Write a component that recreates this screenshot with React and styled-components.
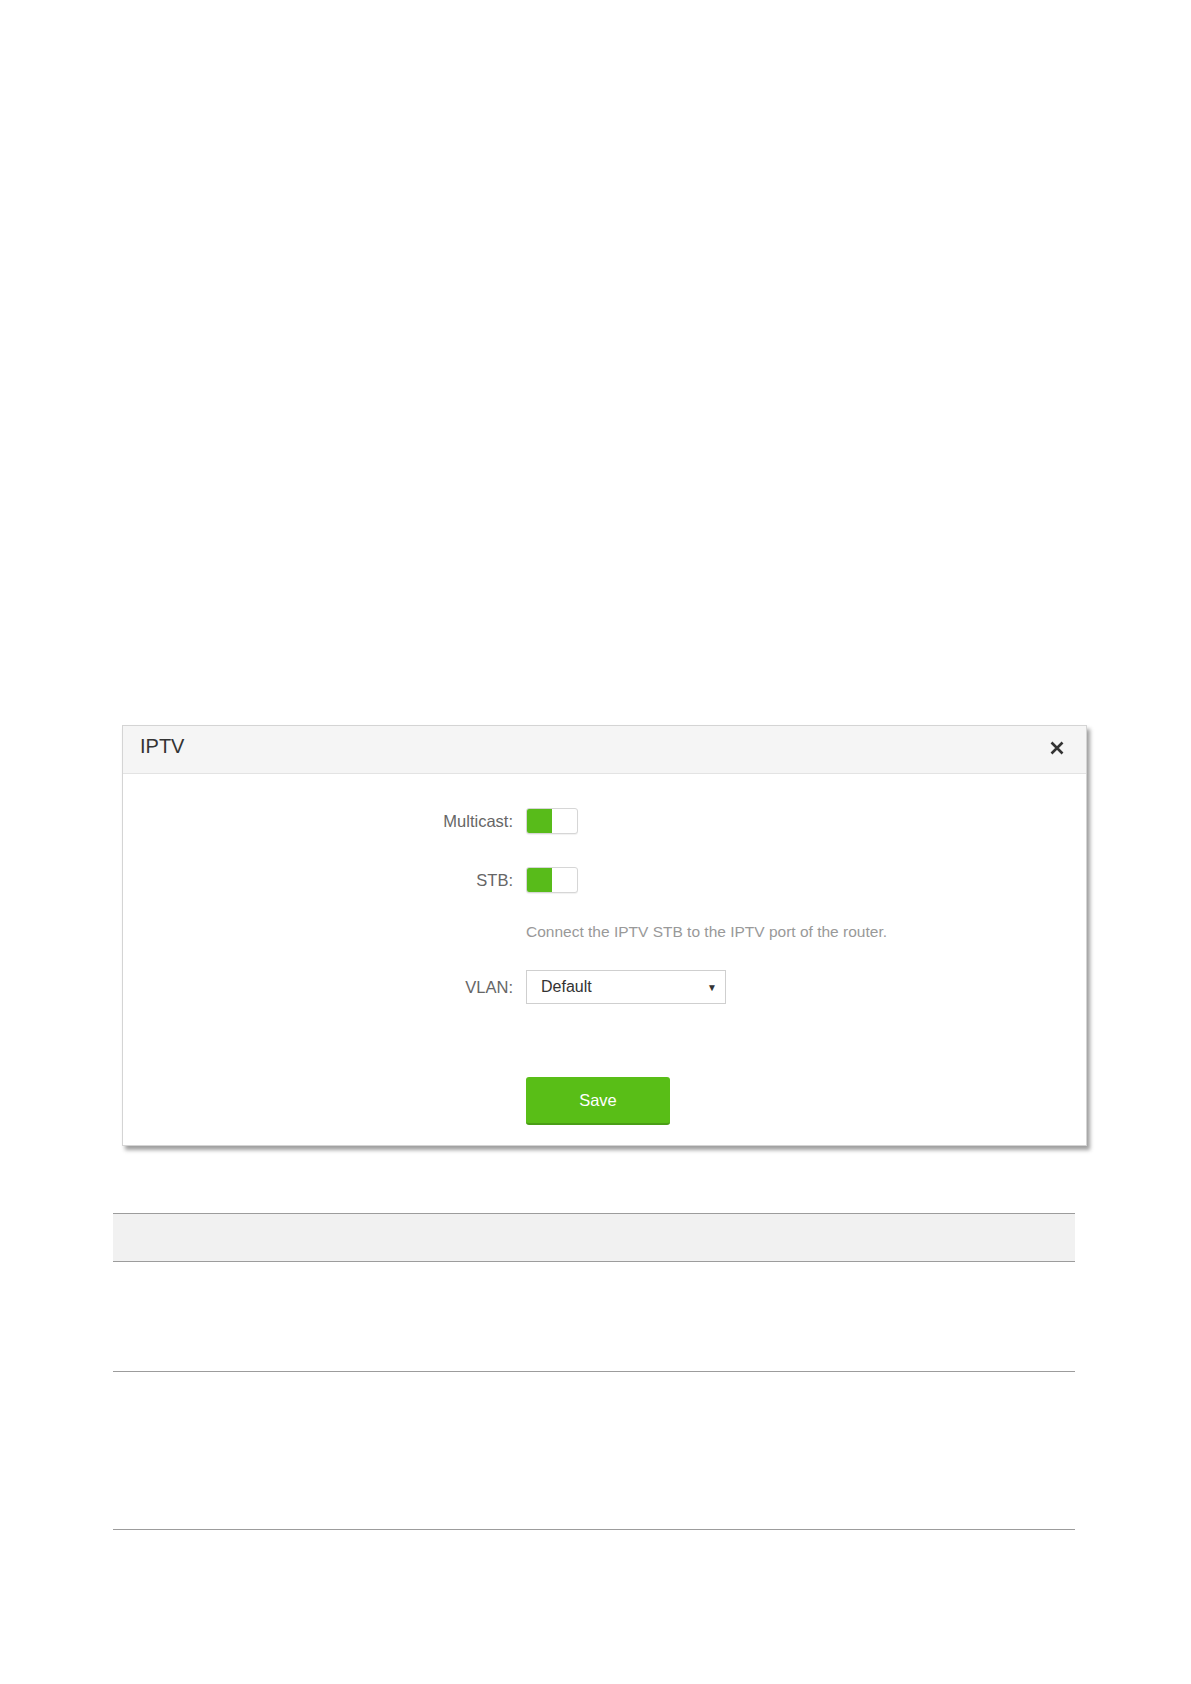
import styled, { createGlobalStyle } from "styled-components";

const GlobalStyle = createGlobalStyle`
  html, body {
    margin: 0;
    padding: 0;
    background: #fff;
  }
  body {
    font-family: "Liberation Sans", Arial, sans-serif;
  }
`;

const App = () => {
  return (
    <Page>
      <GlobalStyle />
      <Dialog>
        <DialogHeader>
          <Title>IPTV</Title>
          <CloseButton aria-label="close">
            <svg width="14" height="14" viewBox="0 0 14 14">
              <path
                d="M1.5 1.5 L12.5 12.5 M12.5 1.5 L1.5 12.5"
                stroke="#333"
                strokeWidth="2.6"
                strokeLinecap="butt"
              />
            </svg>
          </CloseButton>
        </DialogHeader>

        <DialogBody>
          <FormRow>
            <Label>Multicast:</Label>
            <Toggle>
              <ToggleOn />
            </Toggle>
          </FormRow>

          <FormRow $top={33}>
            <Label>STB:</Label>
            <Toggle>
              <ToggleOn />
            </Toggle>
          </FormRow>

          <FormRow $top={30}>
            <Label />
            <Hint>Connect the IPTV STB to the IPTV port of the router.</Hint>
          </FormRow>

          <FormRow $top={29}>
            <Label>VLAN:</Label>
            <Select>
              <span>Default</span>
              <Caret>▼</Caret>
            </Select>
          </FormRow>

          <FormRow $top={73}>
            <Label />
            <SaveButton>Save</SaveButton>
          </FormRow>
        </DialogBody>
      </Dialog>

      <Table>
        <tbody>
          <HeadRow>
            <td />
          </HeadRow>
          <BodyRow $h={110}>
            <td />
          </BodyRow>
          <BodyRow $h={158}>
            <td />
          </BodyRow>
        </tbody>
      </Table>
    </Page>
  );
};

export default App;

const Page = styled.div`
  padding-top: 725px;
  padding-bottom: 150px;
`;

const Dialog = styled.div`
  margin-left: 122px;
  width: 963px;
  height: 419px;
  border: 1px solid #d4d4d4;
  background: #fff;
  box-shadow: 3px 4px 4px rgba(0, 0, 0, 0.38);
  display: flex;
  flex-direction: column;
`;

const DialogHeader = styled.div`
  height: 47px;
  background: #f5f5f5;
  border-bottom: 1px solid #e3e3e3;
  display: flex;
  align-items: flex-start;
  justify-content: space-between;
  padding: 0 22px 0 17px;
`;

const Title = styled.h3`
  margin: 0;
  padding-top: 8px;
  font-weight: normal;
  font-size: 20px;
  line-height: 24px;
  color: #333;
`;

const CloseButton = styled.div`
  margin-top: 15px;
  width: 14px;
  height: 14px;
  cursor: pointer;
  > svg {
    display: block;
  }
`;

const DialogBody = styled.div`
  padding-top: 34px;
  display: flex;
  flex-direction: column;
`;

const FormRow = styled.div`
  display: flex;
  align-items: center;
  gap: 13px;
  margin-top: ${(p) => p.$top || 0}px;
`;

const Label = styled.label`
  width: 390px;
  text-align: right;
  font-size: 16.5px;
  color: #666;
`;

const Toggle = styled.div`
  width: 50px;
  height: 24px;
  border: 1px solid #d6d6d6;
  border-radius: 3px;
  background: #fff;
  overflow: hidden;
  box-shadow: 0 1px 1px rgba(0, 0, 0, 0.06);
`;

const ToggleOn = styled.div`
  width: 25px;
  height: 100%;
  background: #58bb1a;
`;

const Hint = styled.p`
  margin: 0;
  font-size: 15.5px;
  line-height: 18px;
  color: #999;
`;

const Select = styled.div`
  width: 176px;
  height: 32px;
  border: 1px solid #cfcfcf;
  padding: 0 8px 0 14px;
  display: flex;
  align-items: center;
  justify-content: space-between;
  font-size: 16px;
  color: #333;
`;

const Caret = styled.span`
  font-size: 10px;
  color: #333;
`;

const SaveButton = styled.button`
  width: 144px;
  height: 48px;
  border: none;
  border-bottom: 2px solid #4a9e16;
  border-radius: 3px;
  background: #59be17;
  color: #fff;
  font-family: "Liberation Sans", Arial, sans-serif;
  font-size: 16.5px;
  cursor: pointer;
`;

const Table = styled.table`
  margin-top: 67px;
  margin-left: 113px;
  width: 962px;
  border-collapse: collapse;
  td {
    padding: 0;
  }
`;

const HeadRow = styled.tr`
  height: 48px;
  background: #f1f1f1;
  border-top: 1px solid #9c9c9c;
  border-bottom: 1px solid #9c9c9c;
`;

const BodyRow = styled.tr`
  height: ${(p) => p.$h}px;
  border-bottom: 1px solid #9c9c9c;
`;
